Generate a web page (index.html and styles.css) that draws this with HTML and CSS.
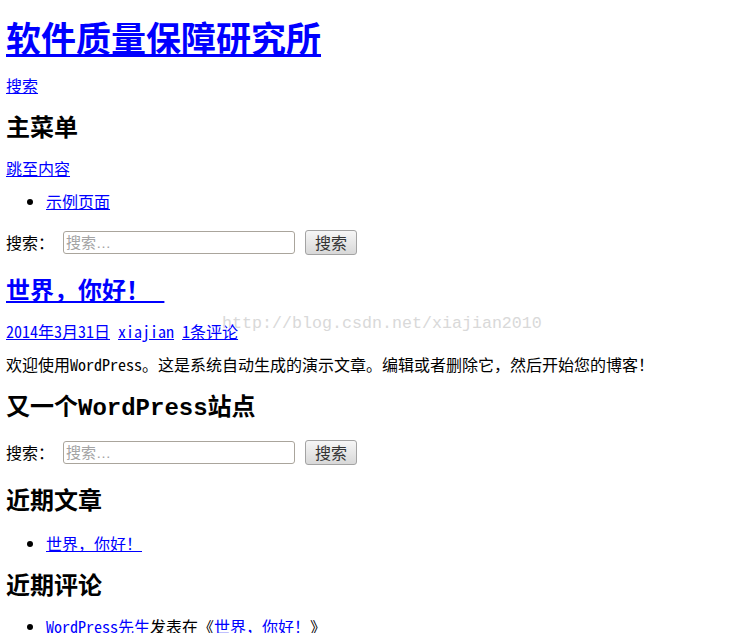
FILE: index.html
```html
<!DOCTYPE html>
<html lang="zh-CN">
<head>
<meta charset="utf-8">
<title>软件质量保障研究所</title>
<link rel="stylesheet" href="styles.css">
</head>
<body>
<h1 class="site-title"><a href="#">软件质量保障研究所</a></h1>
<div class="search-toggle"><a href="#">搜索</a></div>
<h2 class="heading">主菜单</h2>
<p class="text"><a href="#">跳至内容</a></p>
<ul class="list"><li><a href="#">示例页面</a></li></ul>
<form class="search-form">
  <label class="search-label">搜索：</label>
  <input class="search-field" type="search" placeholder="搜索…">
  <button class="search-submit" type="button">搜索</button>
</form>
<h2 class="heading"><a href="#">世界，你好！&nbsp;</a></h2>
<p class="text meta"><a href="#">2014年3月31日</a> <a href="#">xiajian</a> <a href="#">1条评论</a></p>
<p class="text">欢迎使用WordPress。这是系统自动生成的演示文章。编辑或者删除它，然后开始您的博客！</p>
<h2 class="heading heading-tight">又一个WordPress站点</h2>
<form class="search-form search-form-widget">
  <label class="search-label">搜索：</label>
  <input class="search-field" type="search" placeholder="搜索…">
  <button class="search-submit" type="button">搜索</button>
</form>
<h2 class="heading">近期文章</h2>
<ul class="list list-spaced"><li><a href="#">世界，你好！</a></li></ul>
<h2 class="heading">近期评论</h2>
<ul class="list"><li><a class="plain" href="#">WordPress先生</a>发表在《<a class="plain" href="#">世界，你好！</a>》</li></ul>
<div class="watermark">http://blog.csdn.net/xiajian2010</div>
</body>
</html>
```

FILE: styles.css
```css
html, body {
  background: #fff;
}
body {
  position: relative;
  margin: 0;
  padding: 0 6px;
  color: #000;
  font-family: "Noto Sans Mono CJK SC", "Noto Sans CJK SC", monospace;
  font-size: 16px;
  line-height: 17px;
}
a {
  color: #0000ff;
  text-decoration: underline;
}
.site-title {
  margin: 19px 0 0;
  font-family: "Noto Sans CJK SC", sans-serif;
  font-size: 35px;
  line-height: 36px;
  font-weight: bold;
}
.search-toggle {
  margin: 22px 0 16px;
}
.heading {
  margin: 22px 0 16px;
  font-family: "Liberation Mono", "Noto Sans CJK SC", monospace;
  font-size: 24px;
  line-height: 28px;
  font-weight: bold;
}
.heading-tight {
  margin-bottom: 14px;
}
.text {
  margin: 16px 0;
}
.list {
  margin: 16px 0;
  padding-left: 40px;
}
.list-spaced {
  margin-top: 18px;
}
.search-form {
  display: flex;
  align-items: center;
  height: 30px;
  margin: 17px 0 16px;
}
.search-form-widget {
  margin-top: 14px;
}
.search-label {
  margin-right: 9px;
}
.search-field {
  box-sizing: border-box;
  width: 232px;
  height: 23px;
  margin: 0 10px 0 0;
  padding: 0 2px;
  border: 1px solid #aaa59c;
  border-radius: 3px;
  background: #fff;
  font-family: "Liberation Sans", "Noto Sans CJK SC", sans-serif;
  font-size: 15px;
  color: #000;
}
.search-field::placeholder {
  color: #a3a3a3;
}
.search-submit {
  box-sizing: border-box;
  width: 52px;
  height: 25px;
  padding: 0;
  border: 1px solid #a3a3a3;
  border-radius: 3px;
  background: linear-gradient(#f6f6f6, #d8d8d8);
  font-family: "Noto Sans CJK SC", sans-serif;
  font-size: 16px;
  line-height: 23px;
  color: #333;
}
.plain {
  text-decoration: none;
}
.watermark {
  position: absolute;
  left: 222px;
  top: 313px;
  font-family: "Liberation Mono", monospace;
  font-size: 16.67px;
  line-height: 22px;
  color: #d9d9d9;
  white-space: nowrap;
  pointer-events: none;
}
```
